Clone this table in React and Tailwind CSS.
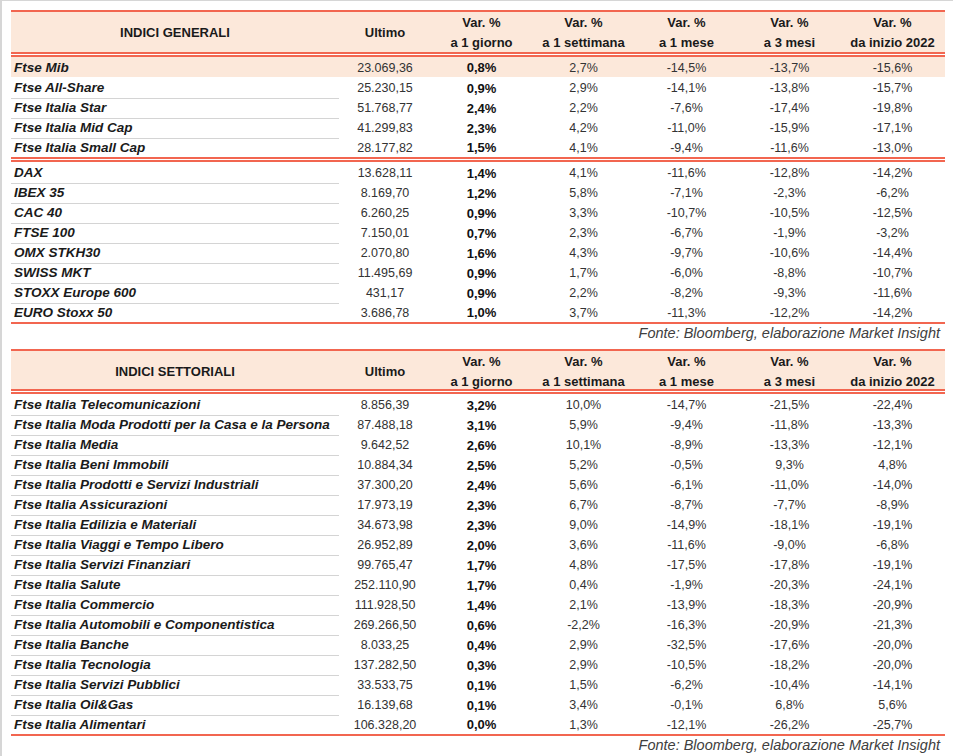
import React from 'react';

// Two tables of index performance (general + sector), Italian market report style.

const COLS = 'grid grid-cols-[328px_92px_101px_103px_103px_103px_103px]';
const FONT = { fontFamily: '"Liberation Sans", Arial, sans-serif' };

const HEADS = [
  ['Var. %', 'a 1 giorno'],
  ['Var. %', 'a 1 settimana'],
  ['Var. %', 'a 1 mese'],
  ['Var. %', 'a 3 mesi'],
  ['Var. %', 'da inizio 2022'],
];

const generaliA = [
  ['Ftse Mib', '23.069,36', '0,8%', '2,7%', '-14,5%', '-13,7%', '-15,6%'],
  ['Ftse All-Share', '25.230,15', '0,9%', '2,9%', '-14,1%', '-13,8%', '-15,7%'],
  ['Ftse Italia Star', '51.768,77', '2,4%', '2,2%', '-7,6%', '-17,4%', '-19,8%'],
  ['Ftse Italia Mid Cap', '41.299,83', '2,3%', '4,2%', '-11,0%', '-15,9%', '-17,1%'],
  ['Ftse Italia Small Cap', '28.177,82', '1,5%', '4,1%', '-9,4%', '-11,6%', '-13,0%'],
];

const generaliB = [
  ['DAX', '13.628,11', '1,4%', '4,1%', '-11,6%', '-12,8%', '-14,2%'],
  ['IBEX 35', '8.169,70', '1,2%', '5,8%', '-7,1%', '-2,3%', '-6,2%'],
  ['CAC 40', '6.260,25', '0,9%', '3,3%', '-10,7%', '-10,5%', '-12,5%'],
  ['FTSE 100', '7.150,01', '0,7%', '2,3%', '-6,7%', '-1,9%', '-3,2%'],
  ['OMX STKH30', '2.070,80', '1,6%', '4,3%', '-9,7%', '-10,6%', '-14,4%'],
  ['SWISS MKT', '11.495,69', '0,9%', '1,7%', '-6,0%', '-8,8%', '-10,7%'],
  ['STOXX Europe 600', '431,17', '0,9%', '2,2%', '-8,2%', '-9,3%', '-11,6%'],
  ['EURO Stoxx 50', '3.686,78', '1,0%', '3,7%', '-11,3%', '-12,2%', '-14,2%'],
];

const settoriali = [
  ['Ftse Italia Telecomunicazioni', '8.856,39', '3,2%', '10,0%', '-14,7%', '-21,5%', '-22,4%'],
  ['Ftse Italia Moda Prodotti per la Casa e la Persona', '87.488,18', '3,1%', '5,9%', '-9,4%', '-11,8%', '-13,3%'],
  ['Ftse Italia Media', '9.642,52', '2,6%', '10,1%', '-8,9%', '-13,3%', '-12,1%'],
  ['Ftse Italia Beni Immobili', '10.884,34', '2,5%', '5,2%', '-0,5%', '9,3%', '4,8%'],
  ['Ftse Italia Prodotti e Servizi Industriali', '37.300,20', '2,4%', '5,6%', '-6,1%', '-11,0%', '-14,0%'],
  ['Ftse Italia Assicurazioni', '17.973,19', '2,3%', '6,7%', '-8,7%', '-7,7%', '-8,9%'],
  ['Ftse Italia Edilizia e Materiali', '34.673,98', '2,3%', '9,0%', '-14,9%', '-18,1%', '-19,1%'],
  ['Ftse Italia Viaggi e Tempo Libero', '26.952,89', '2,0%', '3,6%', '-11,6%', '-9,0%', '-6,8%'],
  ['Ftse Italia Servizi Finanziari', '99.765,47', '1,7%', '4,8%', '-17,5%', '-17,8%', '-19,1%'],
  ['Ftse Italia Salute', '252.110,90', '1,7%', '0,4%', '-1,9%', '-20,3%', '-24,1%'],
  ['Ftse Italia Commercio', '111.928,50', '1,4%', '2,1%', '-13,9%', '-18,3%', '-20,9%'],
  ['Ftse Italia Automobili e Componentistica', '269.266,50', '0,6%', '-2,2%', '-16,3%', '-20,9%', '-21,3%'],
  ['Ftse Italia Banche', '8.033,25', '0,4%', '2,9%', '-32,5%', '-17,6%', '-20,0%'],
  ['Ftse Italia Tecnologia', '137.282,50', '0,3%', '2,9%', '-10,5%', '-18,2%', '-20,0%'],
  ['Ftse Italia Servizi Pubblici', '33.533,75', '0,1%', '1,5%', '-6,2%', '-10,4%', '-14,1%'],
  ['Ftse Italia Oil&Gas', '16.139,68', '0,1%', '3,4%', '-0,1%', '6,8%', '5,6%'],
  ['Ftse Italia Alimentari', '106.328,20', '0,0%', '1,3%', '-12,1%', '-26,2%', '-25,7%'],
];

function DoubleRule() {
  return (
    <div className="flex flex-col">
      <div className="h-[2px] bg-[#f26650]" />
      <div className="h-[1px] bg-white" />
      <div className="h-[2px] bg-[#f26650]" />
    </div>
  );
}

function Header({ title, height }) {
  return (
    <div className={`${COLS} ${height} bg-[#fce8da] text-[13px] font-bold text-[#1a1a1a]`}>
      <div className="flex items-center justify-center pt-[1px]">{title}</div>
      <div className="flex items-center justify-center pt-[1px]">Ultimo</div>
      {HEADS.map(([a, b], i) => (
        <div key={i} className="flex flex-col items-center justify-center leading-[20px] pt-[1px]">
          <span>{a}</span>
          <span>{b}</span>
        </div>
      ))}
    </div>
  );
}

function Row({ r, last, hl }) {
  return (
    <div className={`${COLS} h-[20px] text-[12.5px] ${hl ? 'bg-[#fce8da]' : ''}`}>
      <div
        className={`flex items-center pl-[3px] pt-[1px] text-[13.5px] font-bold italic text-[#1a1a1a] ${
          last || hl ? '' : 'border-b border-[#d4d4d4]'
        }`}
      >
        {r[0]}
      </div>
      <div className="flex items-center justify-center pt-[1px] text-[#333]">{r[1]}</div>
      <div className="flex items-center justify-center pt-[1px] text-[13px] font-bold text-[#111]">{r[2]}</div>
      {r.slice(3).map((v, i) => (
        <div key={i} className="flex items-center justify-center pt-[1px] text-[#333]">
          {v}
        </div>
      ))}
    </div>
  );
}

function Fonte() {
  return (
    <div className="h-[20px] flex items-center justify-end pr-[5px] text-[14.5px] italic text-[#404040]">
      Fonte: Bloomberg, elaborazione Market Insight
    </div>
  );
}

export default function App() {
  return (
    <div className="w-[953px] h-[756px] bg-white border-t border-l-2 border-[#d6d6d6] overflow-hidden" style={FONT}>
      <div className="ml-[9px] w-[934px] pt-[9px]">
        {/* indici generali */}
        <div className="h-[2px] bg-[#f26650]" />
        <Header title="INDICI GENERALI" height="h-[40px]" />
        <DoubleRule />
        {generaliA.map((r, i) => (
          <Row key={r[0]} r={r} hl={i === 0} last={i === generaliA.length - 1} />
        ))}
        <DoubleRule />
        {generaliB.map((r, i) => (
          <Row key={r[0]} r={r} last={i === generaliB.length - 1} />
        ))}
        <div className="h-[2px] bg-[#f26650]" />
        <Fonte />

        {/* indici settoriali */}
        <div className="mt-[5px] h-[2px] bg-[#f26650]" />
        <Header title="INDICI SETTORIALI" height="h-[38px]" />
        <DoubleRule />
        {settoriali.map((r, i) => (
          <Row key={r[0]} r={r} last={i === settoriali.length - 1} />
        ))}
        <div className="h-[2px] bg-[#f26650]" />
        <Fonte />
      </div>
    </div>
  );
}
